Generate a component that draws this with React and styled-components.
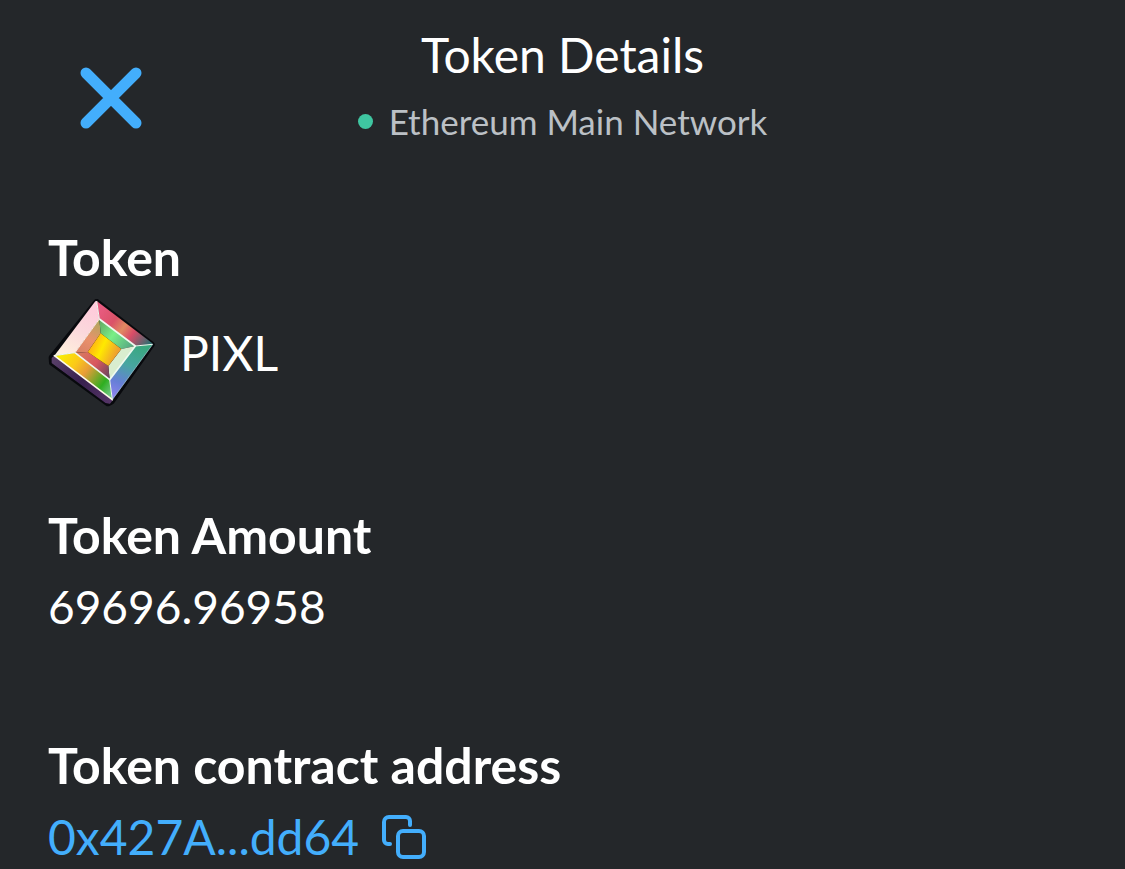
import React from "react";
import styled, { createGlobalStyle } from "styled-components";

function CloseIcon() {
  return (
    <svg width="62" height="62" viewBox="0 0 62 62" fill="none" stroke="currentColor" strokeWidth="11" strokeLinecap="round" aria-hidden="true">
      <path d="M6 6 56 56M56 6 6 56" />
    </svg>
  );
}

function CopyIcon() {
  return (
    <svg width="46" height="46" viewBox="0 0 46 46" fill="none" stroke="currentColor" strokeWidth="4" strokeLinecap="round" strokeLinejoin="round" aria-hidden="true">
      <path d="M9 30H7a4 4 0 0 1-4-4V8a5 5 0 0 1 5-5h17a4 4 0 0 1 4 4v4" />
      <rect x="17" y="17" width="26" height="26" rx="5" />
    </svg>
  );
}

function GemIcon() {
  return (
    <svg width="108" height="108" viewBox="24 29 324 324" aria-hidden="true">
      <defs>
        <linearGradient id="left" x1="160" y1="40" x2="70" y2="200" gradientUnits="userSpaceOnUse">
          <stop offset="0" stopColor="#ffc9da" />
          <stop offset="0.5" stopColor="#fbd8dc" />
          <stop offset="1" stopColor="#fff1dd" />
        </linearGradient>
        <linearGradient id="top" x1="180" y1="60" x2="325" y2="165" gradientUnits="userSpaceOnUse">
          <stop offset="0" stopColor="#e85b80" />
          <stop offset="0.3" stopColor="#da5268" />
          <stop offset="0.5" stopColor="#e18a61" />
          <stop offset="0.68" stopColor="#d94c68" />
          <stop offset="1" stopColor="#346c70" />
        </linearGradient>
        <linearGradient id="right" x1="305" y1="170" x2="235" y2="325" gradientUnits="userSpaceOnUse">
          <stop offset="0" stopColor="#39a77f" />
          <stop offset="0.4" stopColor="#48a6a1" />
          <stop offset="0.75" stopColor="#667fd6" />
          <stop offset="1" stopColor="#8a83ed" />
        </linearGradient>
        <linearGradient id="bottom" x1="55" y1="200" x2="215" y2="315" gradientUnits="userSpaceOnUse">
          <stop offset="0" stopColor="#f9ee00" />
          <stop offset="0.28" stopColor="#fbc918" />
          <stop offset="0.48" stopColor="#e89c38" />
          <stop offset="0.8" stopColor="#2eae20" />
          <stop offset="1" stopColor="#78c98c" />
        </linearGradient>
        <linearGradient id="innerLeft" x1="170" y1="95" x2="110" y2="195" gradientUnits="userSpaceOnUse">
          <stop offset="0" stopColor="#b4a65e" />
          <stop offset="0.5" stopColor="#e9916b" />
          <stop offset="1" stopColor="#d77f66" />
        </linearGradient>
        <linearGradient id="innerTop" x1="180" y1="100" x2="275" y2="170" gradientUnits="userSpaceOnUse">
          <stop offset="0" stopColor="#65ad65" />
          <stop offset="0.45" stopColor="#79ef86" />
          <stop offset="1" stopColor="#58a983" />
        </linearGradient>
        <linearGradient id="innerBottom" x1="115" y1="195" x2="210" y2="265" gradientUnits="userSpaceOnUse">
          <stop offset="0" stopColor="#d87960" />
          <stop offset="0.5" stopColor="#d8575f" />
          <stop offset="1" stopColor="#60455e" />
        </linearGradient>
        <linearGradient id="core" x1="155" y1="155" x2="230" y2="190" gradientUnits="userSpaceOnUse">
          <stop offset="0" stopColor="#ffad16" />
          <stop offset="0.45" stopColor="#ffe900" />
          <stop offset="1" stopColor="#eea12f" />
        </linearGradient>
        <linearGradient id="side" x1="35" y1="210" x2="215" y2="340" gradientUnits="userSpaceOnUse">
          <stop offset="0" stopColor="#594069" />
          <stop offset="0.5" stopColor="#38204e" />
          <stop offset="1" stopColor="#563568" />
        </linearGradient>
      </defs>
      <path d="M170 39 334 166 214 336 204 341 37 220 36 205Z" fill="#08090d" stroke="#08090d" strokeWidth="20" strokeLinejoin="round" />
      <path d="M37 207 45 200 217 331 209 341 197 339 37 220Z" fill="url(#side)" stroke="url(#side)" strokeWidth="4" strokeLinejoin="round" />
      <path d="M166 36 170 35 178 89 105 190 43 199Z" fill="url(#left)" />
      <path d="M170 35 178 89 286 170 338 165 336 161Z" fill="url(#top)" />
      <path d="M338 165 286 170 209 271 217 331Z" fill="url(#right)" />
      <path d="M43 199 105 190 209 271 217 331Z" fill="url(#bottom)" />
      <path d="M178 89 182 132 143 188 105 190Z" fill="url(#innerLeft)" />
      <path d="M178 89 182 132 244 179 286 170Z" fill="url(#innerTop)" />
      <path d="M286 170 244 179 205 230 209 271Z" fill="#d9edcf" />
      <path d="M105 190 143 188 205 230 209 271Z" fill="url(#innerBottom)" />
      <path d="M182 132 244 179 205 230 143 188Z" fill="url(#core)" />
      <path d="M170 35 178 89M338 165 286 170M217 331 209 271M43 199 105 190" stroke="#eefaf0" strokeWidth="3" />
      <path d="M178 89 286 170 209 271 105 190" fill="none" stroke="#effaf0" strokeWidth="5" strokeLinejoin="round" />
      <path d="M105 190 178 89" stroke="#fbe9dc" strokeWidth="3" />
      <path d="M43 199 217 331" stroke="#fffbe8" strokeWidth="5" strokeLinecap="round" />
      <path d="M217 331 338 165" stroke="#a9cfd9" strokeWidth="2" strokeLinecap="round" />
    </svg>
  );
}

function App() {
  return (
    <>
      <GlobalStyle />
      <Header>
        <CloseButton type="button" aria-label="Close">
          <CloseIcon />
        </CloseButton>
        <Heading>
          <Title>Token Details</Title>
          <Network>
            <Dot />
            Ethereum Main Network
          </Network>
        </Heading>
      </Header>
      <Details>
        <Section>
          <Label>Token</Label>
          <TokenRow>
            <GemIcon />
            <Value>PIXL</Value>
          </TokenRow>
        </Section>
        <Section>
          <Label>Token Amount</Label>
          <Amount>69696.96958</Amount>
        </Section>
        <Section>
          <Label>Token contract address</Label>
          <CopyButton type="button" title="Copy address">
            0x427A...dd64
            <CopyIcon />
          </CopyButton>
        </Section>
      </Details>
    </>
  );
}

export default App;

const GlobalStyle = createGlobalStyle`
  * {
    box-sizing: border-box;
  }
  body {
    margin: 0;
    background-color: #24272a;
    color: #fff;
    font-family: Lato, "Liberation Sans", sans-serif;
  }
  svg {
    display: block;
    flex-shrink: 0;
  }
`;

const Header = styled.header`
  display: grid;
  grid-template-columns: 1fr auto 1fr;
  align-items: end;
  padding: 27px 80px 86px;
`;

const CloseButton = styled.button`
  justify-self: start;
  padding: 12px 0;
  border: none;
  background: none;
  color: #43aefc;
  cursor: pointer;
`;

const Heading = styled.div`
  display: flex;
  flex-direction: column;
  align-items: center;
  gap: 18px;
`;

const Title = styled.h1`
  margin: 0;
  font-size: 48px;
  line-height: 56px;
  font-weight: 400;
`;

const Network = styled.div`
  display: flex;
  align-items: center;
  gap: 16px;
  color: #bbc0c5;
  font-size: 35px;
  line-height: 40px;
`;

const Dot = styled.span`
  width: 15px;
  height: 15px;
  border-radius: 50%;
  background-color: #3fc6a1;
`;

const Details = styled.main`
  display: flex;
  flex-direction: column;
  gap: 98px;
  padding: 0 48px;
`;

const Section = styled.section`
  display: flex;
  flex-direction: column;
  align-items: flex-start;
  gap: 12px;
`;

const Label = styled.h2`
  margin: 0;
  font-size: 50px;
  line-height: 60px;
  font-weight: 700;
`;

const Value = styled.span`
  font-size: 48px;
  line-height: 60px;
`;

const Amount = styled(Value)`
  font-size: 46px;
`;

const TokenRow = styled.div`
  display: flex;
  align-items: center;
  gap: 24px;
`;

const CopyButton = styled.button`
  display: flex;
  align-items: center;
  gap: 22px;
  padding: 0;
  border: none;
  background: none;
  color: #43aefc;
  font: inherit;
  font-size: 48px;
  line-height: 60px;
  cursor: pointer;
`;
